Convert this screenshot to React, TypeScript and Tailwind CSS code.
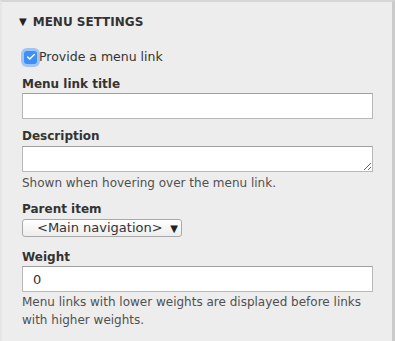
import { Check } from 'lucide-react'

const FONT = "font-['DejaVu_Sans','Liberation_Sans',sans-serif]"

function Label({ children, className = '' }: { children: React.ReactNode; className?: string }) {
  return <div className={`h-[18px] leading-[18px] text-[12px] font-bold text-[#333] ${className}`}>{children}</div>
}

function TextInput({ value = '', className = '' }: { value?: string; className?: string }) {
  return (
    <input
      readOnly
      value={value}
      className={`block w-[351px] h-[26px] border border-[#b8b8b8] border-t-[#a0a0a0] bg-white px-[10px] text-[13px] text-[#333] outline-none ${className}`}
    />
  )
}

export default function App() {
  return (
    <div className={`${FONT} w-[395px] h-[341px] bg-[#eeeded] border-t-2 border-t-[#d6d6d6] border-l-2 border-l-[#e6e6e6] border-r-[3px] border-r-[#cbcbcb]`}>
      {/* header */}
      <div className="mt-[11px] h-[18px] flex items-center pl-[17px]">
        <span className="text-[10px] text-[#222] leading-none">▼</span>
        <span className="ml-[6px] text-[12px] font-bold text-[#333]">MENU SETTINGS</span>
      </div>

      <div className="pl-[20px]">
        {/* checkbox */}
        <div className="mt-[17px] h-[18px] flex items-center">
          <span className="ml-[2px] w-[13px] h-[13px] rounded-[3px] bg-[#3d8ef7] ring-[3px] ring-[#9fc4f5] flex items-center justify-center">
            <Check size={10} strokeWidth={3.5} className="text-white" />
          </span>
          <span className="ml-[2px] text-[12.5px] text-[#333]">Provide a menu link</span>
        </div>

        <Label className="mt-[9px]">Menu link title</Label>
        <TextInput />

        <Label className="mt-[8px]">Description</Label>
        <textarea
          readOnly
          rows={1}
          className="block mt-[1px] w-[351px] h-[26px] border border-[#b8b8b8] border-t-[#a0a0a0] bg-white px-[10px] text-[13px] outline-none"
        />
        <div className="mt-[2px] h-[18px] leading-[18px] text-[12px] text-[#505050]">
          Shown when hovering over the menu link.
        </div>

        <Label className="mt-[8px]">Parent item</Label>
        <div className="mt-[1px] w-[160px] h-[18px] flex items-center justify-between border border-[#a9a9a9] rounded-[3px] bg-gradient-to-b from-white to-[#ededed] pl-[14px] pr-[3px] text-[13px] text-[#333]">
          <span>&lt;Main navigation&gt;</span>
          <span className="text-[10px] text-[#222]">▼</span>
        </div>

        <Label className="mt-[11px]">Weight</Label>
        <TextInput value="0" className="h-[25px]" />
        <div className="mt-[1px] w-[355px] leading-[18px] text-[12px] text-[#505050]">
          Menu links with lower weights are displayed before links with higher weights.
        </div>
      </div>
    </div>
  )
}
